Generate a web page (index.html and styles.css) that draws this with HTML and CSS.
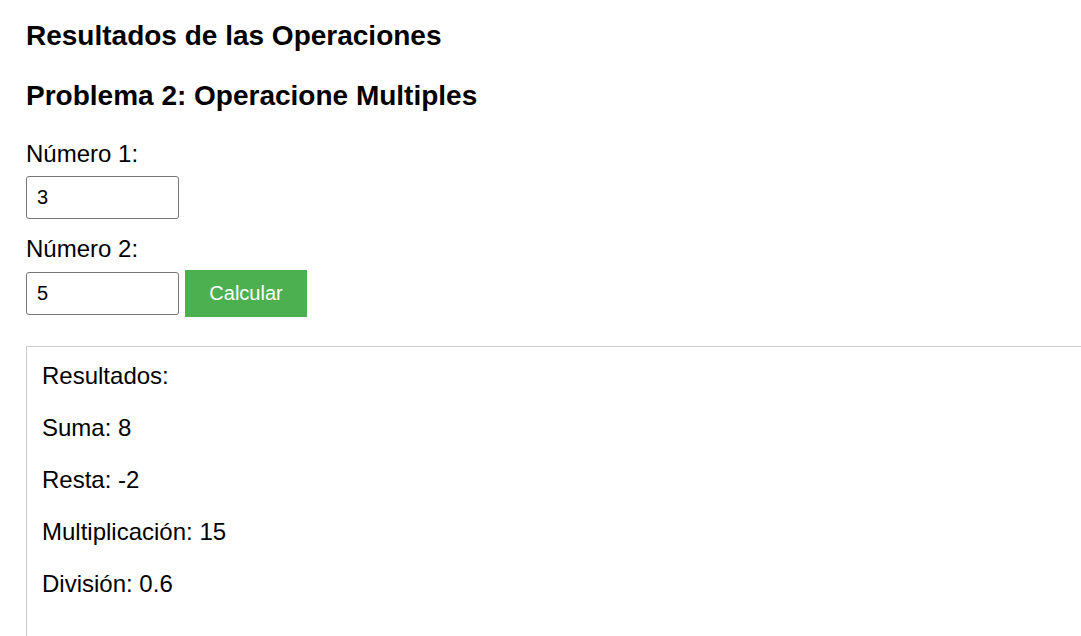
FILE: index.html
```html
<!DOCTYPE html>
<html lang="es">
<head>
<meta charset="utf-8">
<title>Resultados de las Operaciones</title>
<link rel="stylesheet" href="styles.css">
</head>
<body>
<main class="page">
  <h3 class="title">Resultados de las Operaciones</h3>
  <h3 class="title">Problema 2: Operacione Multiples</h3>
  <form class="form">
    <label class="label" for="n1">Número 1:</label>
    <input class="field" id="n1" type="text" value="3">
    <label class="label" for="n2">Número 2:</label>
    <div class="row">
      <input class="field" id="n2" type="text" value="5">
      <button class="btn" type="button">Calcular</button>
    </div>
  </form>
  <section class="results">
    <div class="results-head">Resultados:</div>
    <p class="line">Suma: 8</p>
    <p class="line">Resta: -2</p>
    <p class="line">Multiplicación: 15</p>
    <p class="line">División: 0.6</p>
  </section>
</main>
</body>
</html>
```

FILE: styles.css
```css
html, body {
  margin: 0;
  background: #ffffff;
  overflow: hidden;
}

body {
  font-family: "Liberation Sans", Arial, sans-serif;
  font-size: 24px;
  color: #000000;
}

.page {
  padding: 20px 0 0 26px;
}

.title {
  font-size: 28px;
  font-weight: bold;
  margin: 0 0 28px;
}

.form {
  display: flex;
  flex-direction: column;
  align-items: flex-start;
}

.label {
  display: block;
  margin-bottom: 7px;
}

.field {
  box-sizing: border-box;
  width: 153px;
  height: 43px;
  padding: 0 10px;
  border: 1px solid #767676;
  border-radius: 3px;
  font-family: "Liberation Sans", Arial, sans-serif;
  font-size: 20px;
  color: #000000;
  background: #ffffff;
  margin: 1px 0 16px;
}

.row {
  display: flex;
  align-items: center;
  gap: 6px;
}

.row .field {
  margin: 0;
}

.btn {
  width: 122px;
  height: 47px;
  border: none;
  border-radius: 0;
  background: #4caf50;
  color: #ffffff;
  font-family: "Liberation Sans", Arial, sans-serif;
  font-size: 20px;
  padding: 0;
}

.results {
  margin-top: 29px;
  border: 1.5px solid #cccccc;
  border-right: none;
  padding: 15px;
}

.results-head {
  margin: 0;
}

.line {
  margin: 24px 0;
}

.line:last-child {
  margin-bottom: 24px;
}
```
